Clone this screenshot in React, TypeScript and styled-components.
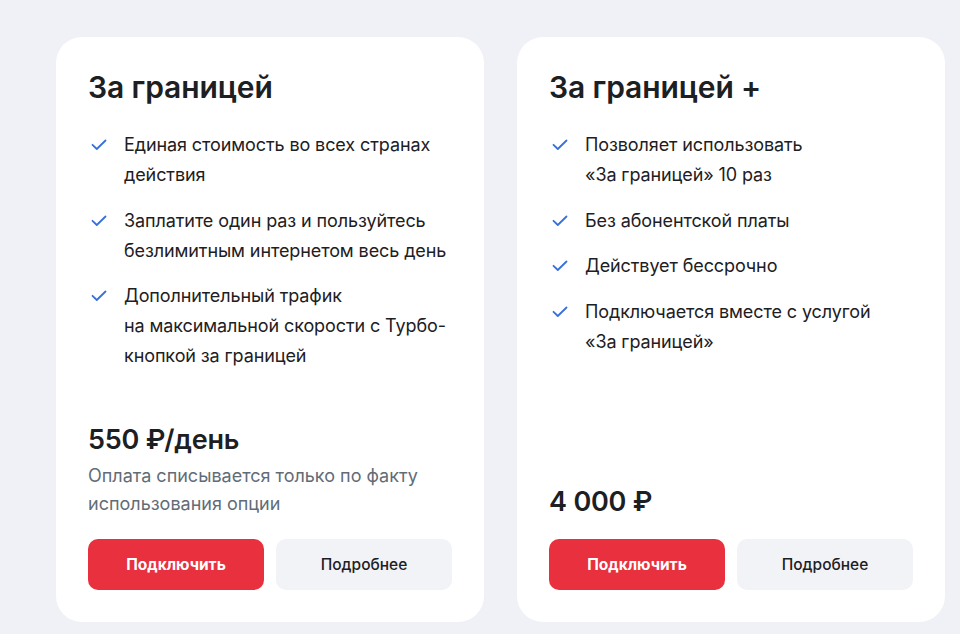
import React from "react";
import styled, { createGlobalStyle } from "styled-components";

const Global = createGlobalStyle`
  html, body { margin: 0; padding: 0; background: #eff1f6; }
  body { font-family: Inter, "Noto Sans", Roboto, sans-serif; color: #1d2023; -webkit-font-smoothing: antialiased; }
  * { box-sizing: border-box; }
`;

const Page = styled.div`
  display: grid;
  grid-template-columns: 428px 428px;
  gap: 33px;
  padding: 37px 16px 12px 56px;
  min-height: 634px;
  align-items: start;
`;

const Card = styled.section`
  background: #ffffff;
  border-radius: 26px;
  padding: 32px;
  height: 585px;
  display: flex;
  flex-direction: column;
`;

const Title = styled.h2`
  margin: 0 0 25px;
  font-size: 30px;
  line-height: 36px;
  font-weight: 600;
  letter-spacing: -0.1px;
`;

const List = styled.ul`
  list-style: none;
  margin: 0;
  padding: 0;
  display: flex;
  flex-direction: column;
  gap: 15.5px;
`;

const Item = styled.li`
  display: flex;
  gap: 16px;
  font-size: 18px;
  line-height: 30px;
  font-weight: 400;
  letter-spacing: -0.1px;
`;

const CheckWrap = styled.span`
  flex: 0 0 18px;
  height: 30px;
  display: flex;
  align-items: center;
  justify-content: center;
  margin-left: 2px;
`;

const Spacer = styled.div`
  flex: 1;
`;

const Price = styled.div`
  font-size: 27px;
  line-height: 32px;
  font-weight: 600;
  letter-spacing: -0.2px;
`;

const Note = styled.p`
  margin: 6px 0 0;
  font-size: 18px;
  line-height: 28px;
  color: #626c77;
`;

const Buttons = styled.div`
  display: grid;
  grid-template-columns: 176px 176px;
  gap: 12px;
  margin-top: 21px;
`;

const Button = styled.button<{ $primary?: boolean }>`
  height: 51px;
  border: none;
  border-radius: 10px;
  font-family: inherit;
  font-size: 15.5px;
  font-weight: ${(p) => (p.$primary ? 700 : 500)};
  color: ${(p) => (p.$primary ? "#ffffff" : "#1d2023")};
  background: ${(p) => (p.$primary ? "#e8303f" : "#f2f3f7")};
  cursor: pointer;
`;

const Check = () => (
  <svg width="16" height="12" viewBox="0 0 16 12" fill="none">
    <path d="M1.5 5.8L5.8 10L14.5 1.5" stroke="#3670d9" strokeWidth="1.8" strokeLinecap="round" strokeLinejoin="round" />
  </svg>
);

type Plan = {
  title: string;
  items: React.ReactNode[];
  price: string;
  note?: React.ReactNode;
};

const plans: Plan[] = [
  {
    title: "За границей",
    items: [
      <>Единая стоимость во всех странах<br />действия</>,
      <>Заплатите один раз и пользуйтесь<br />безлимитным интернетом весь день</>,
      <>Дополнительный трафик<br />на максимальной скорости с Турбо-<br />кнопкой за границей</>,
    ],
    price: "550 ₽/день",
    note: <>Оплата списывается только по факту<br />использования опции</>,
  },
  {
    title: "За границей +",
    items: [
      <>Позволяет использовать<br />«За границей» 10 раз</>,
      <>Без абонентской платы</>,
      <>Действует бессрочно</>,
      <>Подключается вместе с услугой<br />«За границей»</>,
    ],
    price: "4 000 ₽",
  },
];

export default function App() {
  return (
    <>
      <Global />
      <Page>
        {plans.map((p) => (
          <Card key={p.title}>
            <Title>{p.title}</Title>
            <List>
              {p.items.map((it, i) => (
                <Item key={i}>
                  <CheckWrap><Check /></CheckWrap>
                  <span>{it}</span>
                </Item>
              ))}
            </List>
            <Spacer />
            <Price>{p.price}</Price>
            {p.note && <Note>{p.note}</Note>}
            <Buttons>
              <Button $primary>Подключить</Button>
              <Button>Подробнее</Button>
            </Buttons>
          </Card>
        ))}
      </Page>
    </>
  );
}
